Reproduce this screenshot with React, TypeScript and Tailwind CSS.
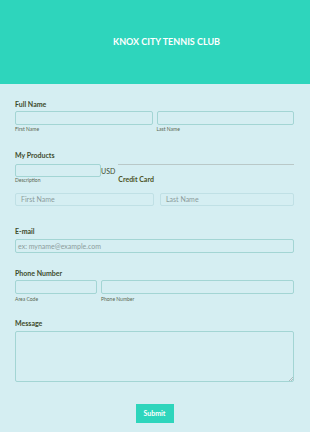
import React from "react";

export default function App() {
  const label = "block text-[7px] leading-[9px] font-bold text-[#3d4b2c]";
  const sub = "block text-[5px] leading-[6px] text-[#5b6650]";
  const input = "h-[14px] rounded-[2px] border border-[#a3d5d4] bg-[#d5eef2]";
  return (
    <div className="w-[310px] h-[432px] bg-[#d5eef2] font-['Lato',sans-serif] overflow-hidden">
      <div className="h-[84px] bg-[#2ed5bc] flex items-center justify-center pl-[23px]">
        <span className="text-white font-bold text-[9px] leading-[10px]">KNOX CITY TENNIS CLUB</span>
      </div>
      <div className="pl-[15px] pr-[16px]">
        {/* Full Name */}
        <div className="pt-[16px]">
          <span className={label}>Full Name</span>
          <div className="grid grid-cols-2 gap-[4px] mt-[2px]">
            <div>
              <div className={input}></div>
              <span className={sub + " mt-[1px]"}>First Name</span>
            </div>
            <div>
              <div className={input}></div>
              <span className={sub + " mt-[1px]"}>Last Name</span>
            </div>
          </div>
        </div>

        {/* My Products */}
        <div className="mt-[19px]">
          <span className={label}>My Products</span>
          <div className="flex items-start mt-[4px]">
            <div className="w-[86px]">
              <div className="h-[13px] rounded-[2px] border border-[#a3d5d4]"></div>
              <span className={sub}>Description</span>
            </div>
            <div className="h-[13px] flex items-center pt-[2px] text-[7px] text-[#3d4b2c]">USD</div>
            <div className="flex-1 ml-[3px] border-t border-[#b9c8c8] pt-[10px]">
              <span className="block text-[7px] leading-[9px] font-bold text-[#4a5224]">Credit Card</span>
            </div>
          </div>
          <div className="flex mt-[9px]">
            <div className="w-[139px] h-[13px] rounded-[2px] border border-[#c0e0e5] flex items-center pl-[5px] text-[7px] text-[#8c9c9c]">
              First Name
            </div>
            <div className="flex-1 ml-[6px] h-[13px] rounded-[2px] border border-[#c0e0e5] flex items-center pl-[5px] text-[7px] text-[#8c9c9c]">
              Last Name
            </div>
          </div>
        </div>

        {/* E-mail */}
        <div className="mt-[21px]">
          <span className={label}>E-mail</span>
          <div className={input + " mt-[3px] flex items-center pl-[2px] text-[7px] text-[#8c9c9c]"}>
            ex: myname@example.com
          </div>
        </div>

        {/* Phone */}
        <div className="mt-[16px]">
          <span className={label}>Phone Number</span>
          <div className="flex gap-[4px] mt-[2px]">
            <div className="w-[82px]">
              <div className={input}></div>
              <span className={sub + " mt-[2px]"}>Area Code</span>
            </div>
            <div className="flex-1">
              <div className={input}></div>
              <span className={sub + " mt-[2px]"}>Phone Number</span>
            </div>
          </div>
        </div>

        {/* Message */}
        <div className="mt-[17px]">
          <span className={label}>Message</span>
          <div className="relative mt-[3px]">
            <textarea
              readOnly
              className="block w-full h-[51px] rounded-[2px] border border-[#a3d5d4] bg-[#d5eef2] outline-none resize-none"
            ></textarea>
            <svg className="absolute right-[1px] bottom-[1px]" width="4" height="4" viewBox="0 0 4 4">
              <path d="M4 0 L0 4 M4 2 L2 4" stroke="#a0a8a8" strokeWidth="0.7" />
            </svg>
          </div>
        </div>

        <div className="flex justify-center mt-[22px]">
          <div className="w-[38px] h-[19px] bg-[#2ed5bc] flex items-center justify-center text-white font-bold text-[7px]">
            Submit
          </div>
        </div>
      </div>
    </div>
  );
}
